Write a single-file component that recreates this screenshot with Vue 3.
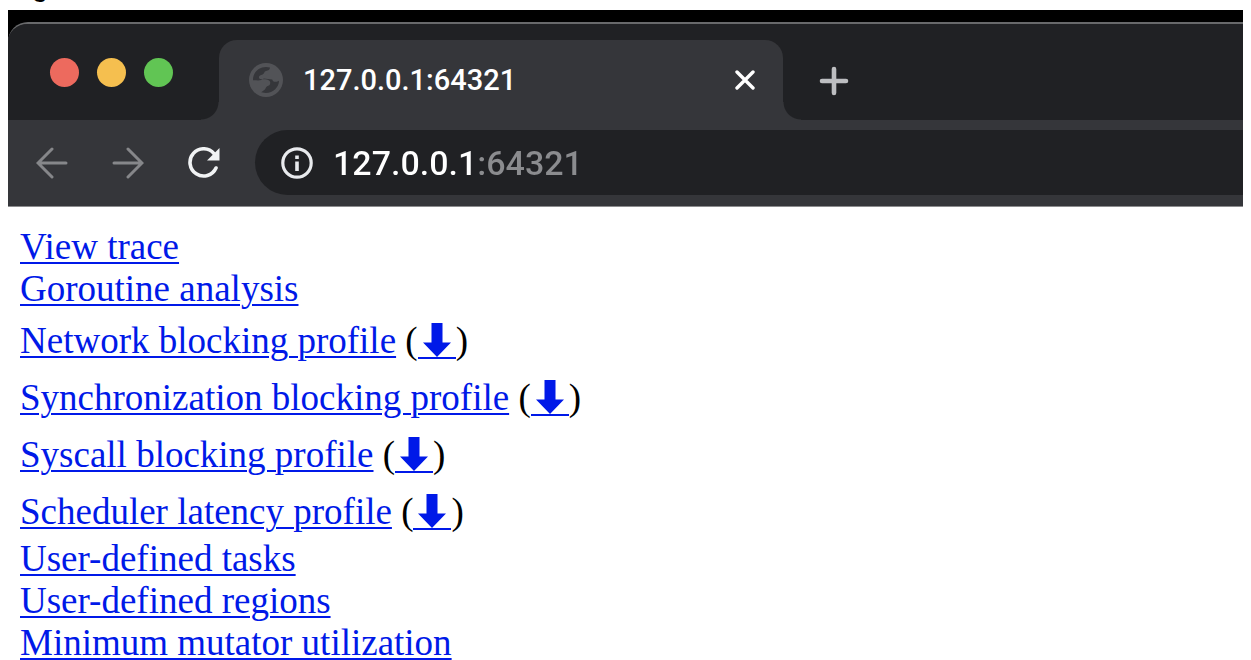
<script setup>
import { ref } from 'vue'

const address = ref('127.0.0.1:64321')
const links = [
  { label: 'View trace' },
  { label: 'Goroutine analysis' },
  { label: 'Network blocking profile', raw: true },
  { label: 'Synchronization blocking profile', raw: true },
  { label: 'Syscall blocking profile', raw: true },
  { label: 'Scheduler latency profile', raw: true },
  { label: 'User-defined tasks' },
  { label: 'User-defined regions' },
  { label: 'Minimum mutator utilization' },
]
</script>

<template>
  <div class="page">
    <div class="caption"><span>g</span></div>
    <div class="desktop">
      <div class="window">
        <header class="tabstrip">
          <div class="lights">
            <button class="light red" aria-label="Close window"></button>
            <button class="light amber" aria-label="Minimize window"></button>
            <button class="light green" aria-label="Zoom window"></button>
          </div>
          <div class="tab">
            <svg class="globe" viewBox="0 0 24 24" aria-hidden="true">
              <circle cx="12" cy="12" r="12" fill="#525357" />
              <path
                fill="#35363a"
                d="M2.8 12.2 C2.6 6.8 6.8 2.8 12 2.8 L14.8 3.2 C14.8 5 13.6 5.4 12 5.6 C10.6 5.8 10.8 7.6 9.6 8.2 C8.2 8.8 7 8.8 7 10.2 C7 11.4 8.4 11.4 10.4 11.4 C13.4 11.4 15 12.2 15 14 C15 15.6 14 16.2 12.8 16.4 C11.8 16.8 12 18.2 11 18.8 L8.6 20.6 L11.8 21.2 C17.2 21.2 21.2 17 21.2 12.6 L19.6 13.2 C17.6 13.6 16.8 13 16.4 11.6 L10.4 11 C8.6 12.8 6 12.2 2.8 12.2 Z"
              />
            </svg>
            <span class="title">127.0.0.1:64321</span>
            <button class="icon close" aria-label="Close tab">
              <svg width="20" height="20" viewBox="0 0 20 20">
                <path d="M2 2 L18 18 M18 2 L2 18" stroke="#fff" stroke-width="3.4" stroke-linecap="round" />
              </svg>
            </button>
          </div>
          <button class="icon add" aria-label="New tab">
            <svg width="30" height="30" viewBox="0 0 30 30">
              <path d="M15 3 V27 M3 15 H27" stroke="#bdbec1" stroke-width="4.6" stroke-linecap="round" />
            </svg>
          </button>
        </header>
        <nav class="toolbar">
          <button class="icon" aria-label="Back">
            <svg width="32" height="32" viewBox="0 0 32 32">
              <path d="M30 16 H2.5 M16 2 L2 16 L16 30" fill="none" stroke="#86878a" stroke-width="3" stroke-linecap="round" />
            </svg>
          </button>
          <button class="icon" aria-label="Forward">
            <svg width="32" height="32" viewBox="0 0 32 32">
              <path d="M2 16 H29.5 M16 2 L30 16 L16 30" fill="none" stroke="#86878a" stroke-width="3" stroke-linecap="round" />
            </svg>
          </button>
          <button class="icon" aria-label="Reload">
            <svg width="32" height="32" viewBox="0 0 32 32">
              <path d="M26 6.6 A13.6 13.6 0 1 0 28 21" fill="none" stroke="#f1f3f4" stroke-width="3.6" stroke-linecap="round" />
              <path d="M31.5 1 V13.5 H19 Z" fill="#f1f3f4" />
            </svg>
          </button>
          <div class="omnibox">
            <button class="icon" aria-label="Site information">
              <svg width="32" height="32" viewBox="0 0 32 32">
                <circle cx="16" cy="16" r="14.2" fill="none" stroke="#e8eaed" stroke-width="3.2" />
                <path d="M16 8.5 V12 M16 14.5 V24" stroke="#e8eaed" stroke-width="3.6" />
              </svg>
            </button>
            <input v-model="address" class="address" type="text" aria-label="Address" spellcheck="false" />
          </div>
        </nav>
      </div>
    </div>
    <main class="content">
      <div v-for="link in links" :key="link.label" class="row" :class="{ tall: link.raw }">
        <a href="#">{{ link.label }}</a>
        <template v-if="link.raw"> (<a href="#" class="raw" :aria-label="'Download ' + link.label"><svg width="38" height="34" viewBox="0 0 38 34"><path d="M13.5 0 H24.5 V19.5 H33 L19 34 L5 19.5 H13.5 Z" fill="currentColor" /></svg></a>)</template>
      </div>
    </main>
  </div>
</template>

<style>
body {
  margin: 0;
  background: #fff;
}
</style>

<style scoped>
.page {
  padding: 0 8px;
}
.caption {
  height: 10px;
  overflow: hidden;
  display: flex;
  align-items: flex-end;
  padding-left: 24px;
  font: 26px/26px Inter, sans-serif;
  color: #000;
}
.caption span {
  height: 36px;
}
.desktop {
  background: #000;
  padding-top: 12px;
  overflow: hidden;
}
.window {
  border-top: 2px solid #68696b;
  border-bottom: 1px solid #8c8c8e;
  border-top-left-radius: 20px;
  background: #35363a;
  overflow: hidden;
}
.tabstrip {
  display: flex;
  align-items: flex-end;
  height: 96px;
  background: #202124;
}
.lights {
  display: flex;
  gap: 18px;
  width: 169px;
  padding-left: 42px;
  align-self: center;
}
.light {
  width: 29px;
  height: 29px;
  padding: 0;
  border: 0;
  border-radius: 50%;
}
.red {
  background: #ed6a5e;
}
.amber {
  background: #f5bf4f;
}
.green {
  background: #61c554;
}
.tab {
  position: relative;
  display: flex;
  align-items: center;
  box-sizing: border-box;
  flex: 0 1 564px;
  height: 80px;
  padding: 0 28px 0 30px;
  border-radius: 18px 18px 0 0;
  background: #35363a;
}
.tab::before,
.tab::after {
  content: '';
  position: absolute;
  bottom: 0;
  width: 18px;
  height: 18px;
}
.tab::before {
  right: 100%;
  background: radial-gradient(circle at 0 0, #202124 17px, #35363a 18px);
}
.tab::after {
  left: 100%;
  background: radial-gradient(circle at 100% 0, #202124 17px, #35363a 18px);
}
.globe {
  width: 34px;
  height: 34px;
}
.title {
  flex: 1;
  padding-left: 20px;
  font: 500 29px/32px Roboto, sans-serif;
  color: #fff;
}
.icon {
  display: flex;
  padding: 0;
  border: 0;
  background: none;
}
.add {
  align-self: flex-end;
  margin: 0 0 24px 36px;
}
.toolbar {
  display: flex;
  align-items: center;
  gap: 44px;
  padding: 10px 0 11px 28px;
}
.omnibox {
  display: flex;
  flex: 1;
  align-items: center;
  gap: 20px;
  height: 65px;
  margin-left: -9px;
  padding-left: 26px;
  border-radius: 33px 0 0 33px;
  background: #202124;
}
.address {
  flex: 1;
  min-width: 0;
  padding: 0;
  border: 0;
  outline: 0;
  font: 500 34px/40px Roboto, sans-serif;
  color: transparent;
  background: linear-gradient(to right, #fff 143px, #8b8c8f 143px);
  background-clip: text;
}
.content {
  padding: 19px 12px 0;
  font: 37px/42px "Liberation Serif", serif;
  color: #000;
}
.row {
  height: 42px;
  white-space: nowrap;
}
.tall {
  padding: 10px 0 5px;
}
a {
  color: #0019e8;
  text-decoration-thickness: 2px;
  text-underline-offset: 3px;
}
.raw {
  display: inline-block;
  height: 34px;
  border-bottom: 2px solid;
  vertical-align: -4px;
  line-height: 0;
}
</style>
